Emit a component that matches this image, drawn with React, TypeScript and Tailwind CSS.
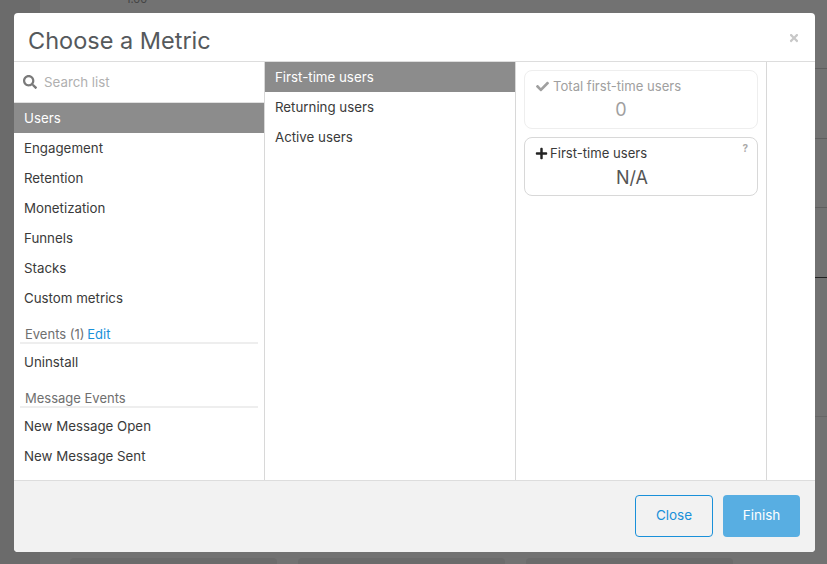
import React from "react";
import { FaSearch, FaCheck, FaPlus, FaTimes } from "react-icons/fa";

const L1 = ["Engagement", "Retention", "Monetization", "Funnels", "Stacks", "Custom metrics"];

function Item({ label, active }: { label: string; active?: boolean }) {
  return (
    <div className={`h-[30px] flex items-center pt-[2px] text-[13.3px] ${active ? "bg-[#8c8c8c] text-white" : "text-[#3a3a3a]"}`}>
      {label}
    </div>
  );
}

function Backdrop() {
  return (
    <>
      <div className="absolute left-0 top-0 bottom-0 w-[40px] bg-[#6b6b6b]" />
      <span className="absolute left-[126px] top-[-9px] text-[11px] text-[#444]">1.00</span>
      <div className="absolute left-[70px] top-[558px] w-[207px] h-[20px] rounded-t bg-[#6b6b6b]" />
      <div className="absolute left-[298px] top-[558px] w-[207px] h-[20px] rounded-t bg-[#6b6b6b]" />
      <div className="absolute left-[526px] top-[558px] w-[207px] h-[20px] rounded-t bg-[#6b6b6b]" />
      <div className="absolute left-[815px] right-0 top-[68px] h-px bg-[#5f5f5f]" />
      <div className="absolute left-[815px] right-0 top-[138px] h-px bg-[#5f5f5f]" />
      <div className="absolute left-[815px] right-0 top-[207px] h-px bg-[#5f5f5f]" />
      <div className="absolute left-[815px] right-0 top-[277px] h-px bg-[#222222]" />
      <div className="absolute left-[815px] right-0 top-[416px] h-px bg-[#666666]" />
    </>
  );
}

export default function App() {
  return (
    <div className="relative w-[827px] h-[564px] overflow-hidden bg-[#727272] font-['Inter','Liberation_Sans',sans-serif]">
      <Backdrop />
      <div className="absolute left-[14px] top-[13px] w-[801px] h-[539px] bg-white rounded-[4px] flex flex-col overflow-hidden">
        <div className="h-[49px] shrink-0 border-b border-[#dddddd] flex items-center justify-between pl-[14px] pr-[15px]">
          <span className="text-[23.5px] text-[#55595c] leading-none pt-[7px]">Choose a Metric</span>
          <FaTimes className="text-[#c8c8c8] text-[12px] mt-[2px]" />
        </div>
        <div className="flex-1 flex min-h-0">
          <div className="w-[251px] shrink-0 border-r border-[#d8d8d8] flex flex-col">
            <div className="h-[41px] shrink-0 border-b border-[#e0e0e0] flex items-center pl-[9px] gap-[7px]">
              <FaSearch className="text-[#7a7a7a] text-[14px]" />
              <span className="text-[13.3px] text-[#b0b0b0] pt-[2px]">Search list</span>
            </div>
            <div className="[&>div]:pl-[10px]">
              <Item label="Users" active />
              {L1.map((l) => <Item key={l} label={l} />)}
            </div>
            <div className="mt-[13px] mx-[6px] border-b-2 border-[#eeeeee] pl-[5px] text-[13px] h-[18px] leading-[17px] text-[#6f6f6f]">
              Events (1) <span className="text-[#1a90d9] ml-[-1px]">Edit</span>
            </div>
            <div className="[&>div]:pl-[10px] mt-[3px]"><Item label="Uninstall" /></div>
            <div className="mt-[13px] mx-[6px] border-b-2 border-[#eeeeee] pl-[5px] text-[13px] h-[18px] leading-[17px] text-[#6f6f6f]">
              Message Events
            </div>
            <div className="[&>div]:pl-[10px] mt-[3px]">
              <Item label="New Message Open" />
              <Item label="New Message Sent" />
            </div>
          </div>
          <div className="w-[251px] shrink-0 border-r border-[#d8d8d8] [&>div]:pl-[10px]">
            <Item label="First-time users" active />
            <Item label="Returning users" />
            <Item label="Active users" />
          </div>
          <div className="w-[251px] shrink-0 border-r border-[#d8d8d8] pl-[8px] pr-[8px] pt-[8px] flex flex-col gap-[8px]">
            <div className="h-[59px] border border-[#eeeeee] rounded-[8px] px-[11px] pt-[6px] text-[#a0a0a0]">
              <div className="flex items-center gap-[4px] text-[13.1px] leading-[18px]"><FaCheck className="text-[13px]" />Total first-time users</div>
              <div className="text-center pr-[40px] text-[18px] leading-[24px] mt-[3px]">0</div>
            </div>
            <div className="relative h-[59px] border border-[#d8d8d8] rounded-[8px] px-[10px] pt-[6px] text-[#3a3a3a]">
              <div className="flex items-center gap-[2px] text-[13.1px] leading-[18px]"><FaPlus className="text-[13px] text-[#222]" />First-time users</div>
              <div className="text-center pr-[18px] text-[18px] leading-[24px] mt-[4px] text-[#555]">N/A</div>
              <span className="absolute right-[9px] top-[3px] text-[10px] font-bold text-[#aaa]">?</span>
            </div>
          </div>
        </div>
        <div className="h-[72px] shrink-0 border-t border-[#dddddd] bg-[#f2f2f2] flex items-center justify-end gap-[10px] pr-[15px] pb-[2px]">
          <button className="w-[78px] h-[42px] border border-[#1a90d9] rounded-[4px] text-[13.5px] text-[#1a90d9]">Close</button>
          <button className="w-[77px] h-[42px] bg-[#58aee2] rounded-[4px] text-[13.5px] text-white">Finish</button>
        </div>
      </div>
    </div>
  );
}
